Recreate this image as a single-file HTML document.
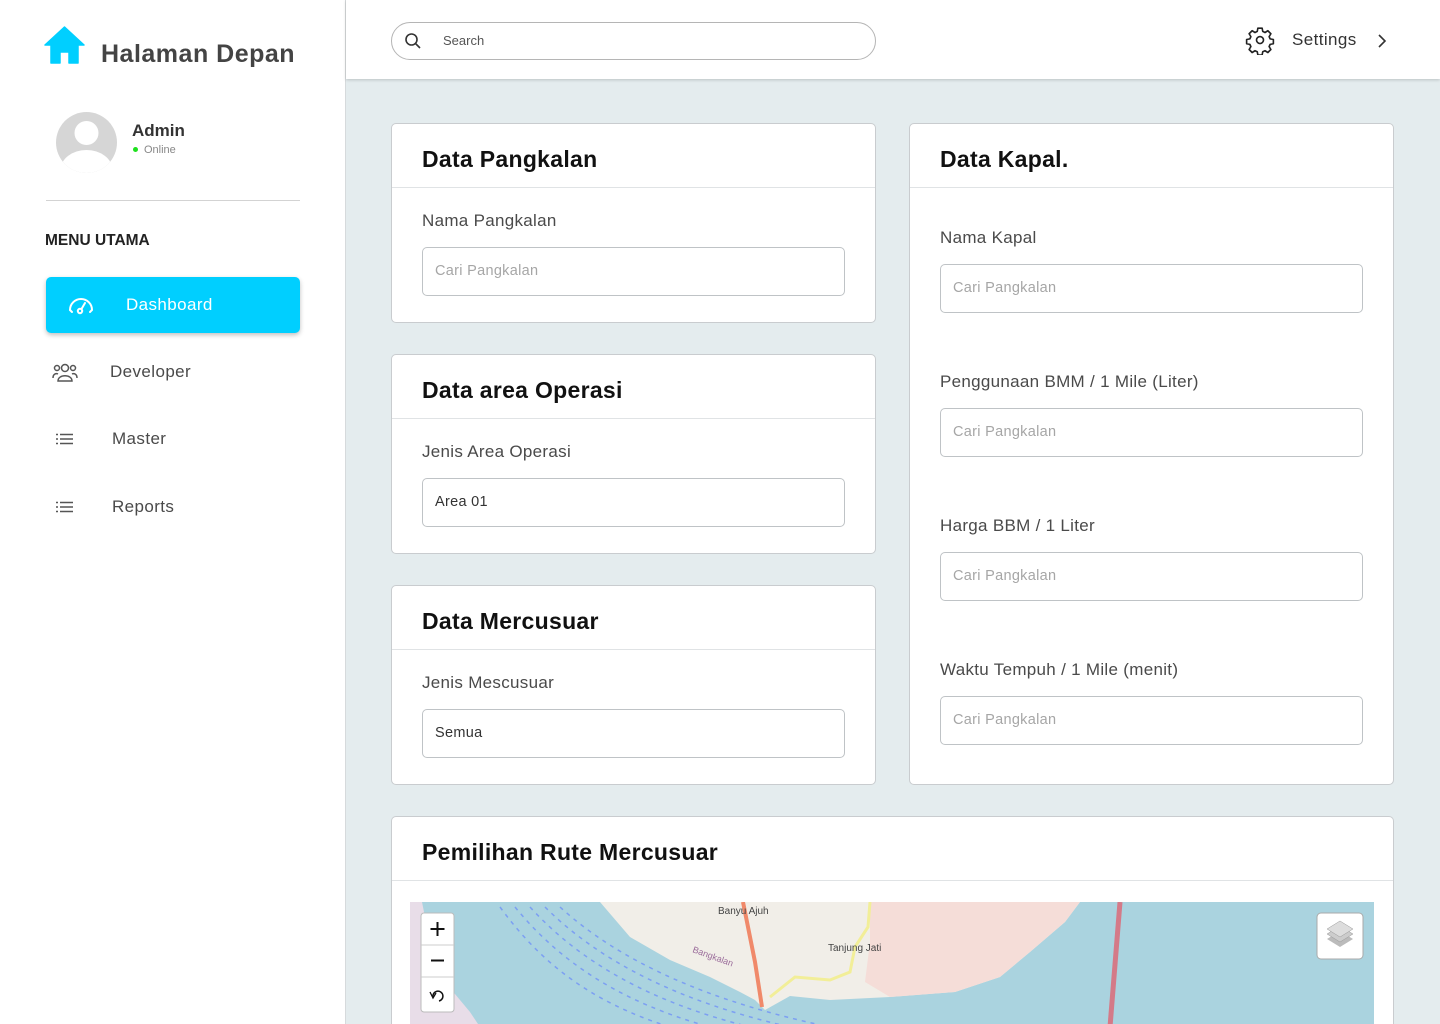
<!DOCTYPE html>
<html><head><meta charset="utf-8">
<style>
*{box-sizing:border-box;margin:0;padding:0}
html{width:1440px;height:1024px;overflow:hidden}
body{width:1440px;height:1024px;overflow:hidden;font-family:"Liberation Sans",sans-serif;background:#e4ecee;position:relative}
.abs{position:absolute}
#side{left:0;top:0;width:346px;height:1024px;background:#fff;border-right:1px solid #d6dadc}
#top{left:346px;top:0;width:1094px;height:79px;background:#fff;box-shadow:0 1px 3px rgba(0,0,0,.18)}
.card{position:absolute;background:#fff;border:1px solid #c9cccf;border-radius:5px;overflow:hidden}
.card h2{position:absolute;left:30px;top:22px;font-size:23px;font-weight:bold;color:#111;letter-spacing:.3px}
.card .hl{position:absolute;left:0;right:0;top:63px;border-top:1px solid #e0e3e5}
.lbl{position:absolute;left:30px;font-size:17px;color:#4a4a4a;letter-spacing:.3px}
.inp{position:absolute;left:30px;width:423px;height:49px;border:1px solid #bfc3c6;border-radius:5px;font-size:14.5px;color:#a6a6a6;padding:15px 12px;letter-spacing:.3px}
.inp.v{color:#333}
.nav{position:absolute;font-size:17px;color:#4a4a4a;letter-spacing:.4px}
</style></head><body>
<div id="side" class="abs">
  <svg class="abs" style="left:44px;top:26px" width="41" height="38" viewBox="0 0 41 38"><path d="M20.5 1 L40 19 L34 19 L34 37 L25 37 L25 26 L16 26 L16 37 L7 37 L7 19 L1 19 Z" fill="#00cfff" stroke="#00cfff" stroke-width="1.5" stroke-linejoin="round"/></svg>
  <div class="abs" style="left:101px;top:40px;font-size:25px;font-weight:bold;color:#444;letter-spacing:.5px">Halaman Depan</div>
  <svg class="abs" style="left:56px;top:112px" width="61" height="61" viewBox="0 0 61 61"><defs><clipPath id="c"><circle cx="30.5" cy="30.5" r="30.5"/></clipPath></defs><circle cx="30.5" cy="30.5" r="30.5" fill="#d6d6d6"/><g clip-path="url(#c)"><circle cx="30.5" cy="21" r="12" fill="#fff"/><ellipse cx="30.5" cy="58" rx="26" ry="20" fill="#fff"/></g></svg>
  <div class="abs" style="left:132px;top:121px;font-size:17px;font-weight:bold;color:#333">Admin</div>
  <div class="abs" style="left:133px;top:147px;width:5px;height:5px;border-radius:50%;background:#1ee01e"></div>
  <div class="abs" style="left:144px;top:144px;font-size:11px;color:#888">Online</div>
  <div class="abs" style="left:46px;top:200px;width:254px;border-top:1px solid #d3d3d3"></div>
  <div class="abs" style="left:45px;top:232px;font-size:15.5px;font-weight:bold;color:#222">MENU UTAMA</div>
  <div class="abs" style="left:46px;top:277px;width:254px;height:56px;background:#00cfff;border-radius:5px;box-shadow:0 2px 5px rgba(0,0,0,.25)"></div>
  <svg class="abs" style="left:67px;top:294px" width="28" height="22" viewBox="0 0 28 22" fill="none" stroke="#fff" stroke-width="2" stroke-linecap="round"><path d="M3 16 A11 11 0 0 1 25 16 L23 18"/><path d="M3 16 L5 18"/><circle cx="13" cy="17" r="2.2"/><path d="M14.5 15 L18 9"/></svg>
  <div class="abs" style="left:126px;top:295px;font-size:17px;color:#fff;letter-spacing:.4px">Dashboard</div>
  <svg class="abs" style="left:52px;top:362px" width="26" height="20" viewBox="0 0 26 20" fill="none" stroke="#555" stroke-width="1.5"><circle cx="13" cy="6" r="3.5"/><path d="M6 19 C6 12 20 12 20 19 Z"/><circle cx="5" cy="6" r="2.5"/><circle cx="21" cy="6" r="2.5"/><path d="M1 16 C1 12 4 11 6 12"/><path d="M25 16 C25 12 22 11 20 12"/></svg>
  <div class="nav" style="left:110px;top:362px">Developer</div>
  <svg class="abs" style="left:56px;top:433px" width="17" height="12" viewBox="0 0 17 12" stroke="#555" stroke-width="1.4"><path d="M0 1.5h2M4 1.5h13M0 6h2M4 6h13M0 10.5h2M4 10.5h13"/></svg>
  <div class="nav" style="left:112px;top:429px">Master</div>
  <svg class="abs" style="left:56px;top:501px" width="17" height="12" viewBox="0 0 17 12" stroke="#555" stroke-width="1.4"><path d="M0 1.5h2M4 1.5h13M0 6h2M4 6h13M0 10.5h2M4 10.5h13"/></svg>
  <div class="nav" style="left:112px;top:497px">Reports</div>
</div>
<div id="top" class="abs">
  <div class="abs" style="left:45px;top:22px;width:485px;height:38px;border:1px solid #b5b5b5;border-radius:19px"></div>
  <svg class="abs" style="left:59px;top:33px" width="16" height="16" viewBox="0 0 16 16" fill="none" stroke="#333" stroke-width="1.6"><circle cx="6.5" cy="6.5" r="5.5"/><path d="M10.5 10.5 L15 15"/></svg>
  <div class="abs" style="left:97px;top:33px;font-size:13px;color:#555">Search</div>
  <svg class="abs" style="left:899px;top:25px" width="30" height="30" viewBox="0 0 24 24" fill="none" stroke="#222" stroke-width="1.3" stroke-linejoin="round"><circle cx="12" cy="12" r="2.8"/><path d="M10.3 2.5h3.4l.5 2.6 1.8.9 2.3-1.4 2.4 2.4-1.4 2.3.8 1.8 2.6.5v3.4l-2.6.5-.8 1.8 1.4 2.3-2.4 2.4-2.3-1.4-1.8.8-.5 2.6h-3.4l-.5-2.6-1.8-.8-2.3 1.4-2.4-2.4 1.4-2.3-.8-1.8-2.6-.5v-3.4l2.6-.5.8-1.8-1.4-2.3 2.4-2.4 2.3 1.4 1.8-.9z"/></svg>
  <div class="abs" style="left:946px;top:30px;font-size:17px;color:#333;letter-spacing:.4px">Settings</div>
  <svg class="abs" style="left:1031px;top:34px" width="10" height="14" viewBox="0 0 10 14" fill="none" stroke="#333" stroke-width="1.6"><path d="M2 1 L8 7 L2 13"/></svg>
</div>

<div class="card" style="left:391px;top:123px;width:485px;height:200px">
  <h2>Data Pangkalan</h2><div class="hl"></div>
  <div class="lbl" style="top:87px">Nama Pangkalan</div>
  <div class="inp" style="top:123px">Cari Pangkalan</div>
</div>
<div class="card" style="left:391px;top:354px;width:485px;height:200px">
  <h2>Data area Operasi</h2><div class="hl"></div>
  <div class="lbl" style="top:87px">Jenis Area Operasi</div>
  <div class="inp v" style="top:123px">Area 01</div>
</div>
<div class="card" style="left:391px;top:585px;width:485px;height:200px">
  <h2>Data Mercusuar</h2><div class="hl"></div>
  <div class="lbl" style="top:87px">Jenis Mescusuar</div>
  <div class="inp v" style="top:123px">Semua</div>
</div>
<div class="card" style="left:909px;top:123px;width:485px;height:662px">
  <h2>Data Kapal.</h2><div class="hl"></div>
  <div class="lbl" style="top:104px">Nama Kapal</div>
  <div class="inp" style="top:140px">Cari Pangkalan</div>
  <div class="lbl" style="top:248px">Penggunaan BMM / 1 Mile (Liter)</div>
  <div class="inp" style="top:284px">Cari Pangkalan</div>
  <div class="lbl" style="top:392px">Harga BBM / 1 Liter</div>
  <div class="inp" style="top:428px">Cari Pangkalan</div>
  <div class="lbl" style="top:536px">Waktu Tempuh / 1 Mile (menit)</div>
  <div class="inp" style="top:572px">Cari Pangkalan</div>
</div>
<div class="card" style="left:391px;top:816px;width:1003px;height:214px;border-bottom:none;border-radius:5px 5px 0 0">
  <h2>Pemilihan Rute Mercusuar</h2><div class="hl"></div>
  <svg class="abs" style="left:18px;top:85px" width="964" height="122" viewBox="0 0 964 122">
    <rect width="964" height="122" fill="#aad3df"/>
    <path d="M0 0 L12 0 L20 40 L35 80 L60 110 L70 125 L0 125 Z" fill="#e8dde8"/>
    <path d="M190 0 L670 0 L655 20 L620 50 L590 75 L545 90 L480 95 L420 98 L380 94 L355 108 L345 98 L330 90 L300 75 L260 58 L220 35 Z" fill="#f1eee8"/>
    <path d="M460 0 L670 0 L655 20 L620 50 L590 75 L545 90 L480 95 L455 80 L460 40 Z" fill="#f5ddd8"/>
    <path d="M333 0 L345 60 L352 105" stroke="#f0896a" stroke-width="4" fill="none"/>
    <path d="M460 0 L458 25 L445 45 L440 70 L420 78 L385 75 L360 95" stroke="#f2ee98" stroke-width="3" fill="none"/>
    <path d="M710 0 L700 125" stroke="#d47a88" stroke-width="5"/>
    <g stroke="#7c9ff2" stroke-width="1.5" stroke-dasharray="4 5" fill="none">
      <path d="M90 5 C130 60 180 100 260 125"/><path d="M105 5 C150 60 210 100 300 125"/><path d="M120 5 C170 60 240 100 340 125"/><path d="M135 5 C190 60 270 100 380 125"/><path d="M150 5 C210 60 300 100 420 125"/>
    </g>
    <text x="308" y="12" font-size="10" fill="#444" font-family="Liberation Sans">Banyu Ajuh</text>
    <text x="418" y="49" font-size="10" fill="#444" font-family="Liberation Sans">Tanjung Jati</text>
    <text x="282" y="50" font-size="9" fill="#9a6b9a" font-family="Liberation Sans" transform="rotate(20 282 50)">Bangkalan</text>
    <rect x="11" y="11" width="33" height="99" rx="3" fill="#fff" stroke="#bbb"/>
    <path d="M11 43h33M11 75h33" stroke="#ccc"/>
    <path d="M27.5 20v14M20.5 27h14M21 58.5h13" stroke="#111" stroke-width="2"/>
    <path d="M23 95 a5 5 0 1 1 6 4" fill="none" stroke="#111" stroke-width="1.5"/><path d="M20 90 L23 96 L26 91" fill="none" stroke="#111" stroke-width="1.3"/>
    <rect x="907" y="11" width="46" height="46" rx="4" fill="#fff" stroke="#aaa"/>
    <path d="M917 37 L930 45 L943 37 L930 29 Z" fill="#bbb"/><path d="M917 32 L930 40 L943 32 L930 24 Z" fill="#ccc" stroke="#999" stroke-width=".5"/><path d="M917 27 L930 35 L943 27 L930 19 Z" fill="#ddd" stroke="#999" stroke-width=".5"/>
  </svg>
</div>
</body></html>
